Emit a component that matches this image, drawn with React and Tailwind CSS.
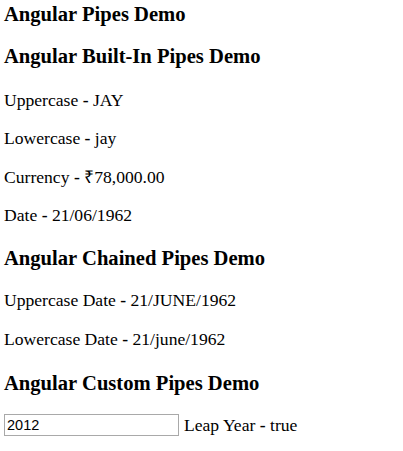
export default function App() {
  const serif = { fontFamily: '"Liberation Serif", "Times New Roman", serif' }
  return (
    <div className="min-h-screen bg-white text-black px-[4px] pt-[2px]" style={serif}>
      <h4 className="text-[20.6px] leading-[24px] font-bold">Angular Pipes Demo</h4>

      <h3 className="mt-[18px] text-[20.6px] leading-[24px] font-bold">Angular Built-In Pipes Demo</h3>
      <p className="mt-[22px] text-[17.6px] leading-[20px]">Uppercase <b>-</b> JAY</p>
      <p className="mt-[18px] text-[17.6px] leading-[20px]">Lowercase <b>-</b> jay</p>
      <p className="mt-[19px] text-[17.6px] leading-[20px]">Currency <b>-</b> ₹78,000.00</p>
      <p className="mt-[18px] text-[17.6px] leading-[20px]">Date <b>-</b> 21/06/1962</p>

      <h3 className="mt-[21px] text-[20.6px] leading-[24px] font-bold">Angular Chained Pipes Demo</h3>
      <p className="mt-[20px] text-[17.6px] leading-[20px]">Uppercase Date <b>-</b> 21/JUNE/1962</p>
      <p className="mt-[19px] text-[17.6px] leading-[20px]">Lowercase Date <b>-</b> 21/june/1962</p>

      <h3 className="mt-[22px] text-[20.6px] leading-[24px] font-bold">Angular Custom Pipes Demo</h3>
      <div className="mt-[19px] flex items-center gap-[5px]">
        <input
          type="text"
          defaultValue="2012"
          className="w-[175px] h-[22px] border border-[#a9a9a9] px-[2px] text-[14.5px] outline-none"
          style={{ fontFamily: '"Liberation Sans", Arial, sans-serif' }}
        />
        <span className="text-[17.6px] leading-[20px]">Leap Year <b>-</b> true</span>
      </div>
    </div>
  )
}
